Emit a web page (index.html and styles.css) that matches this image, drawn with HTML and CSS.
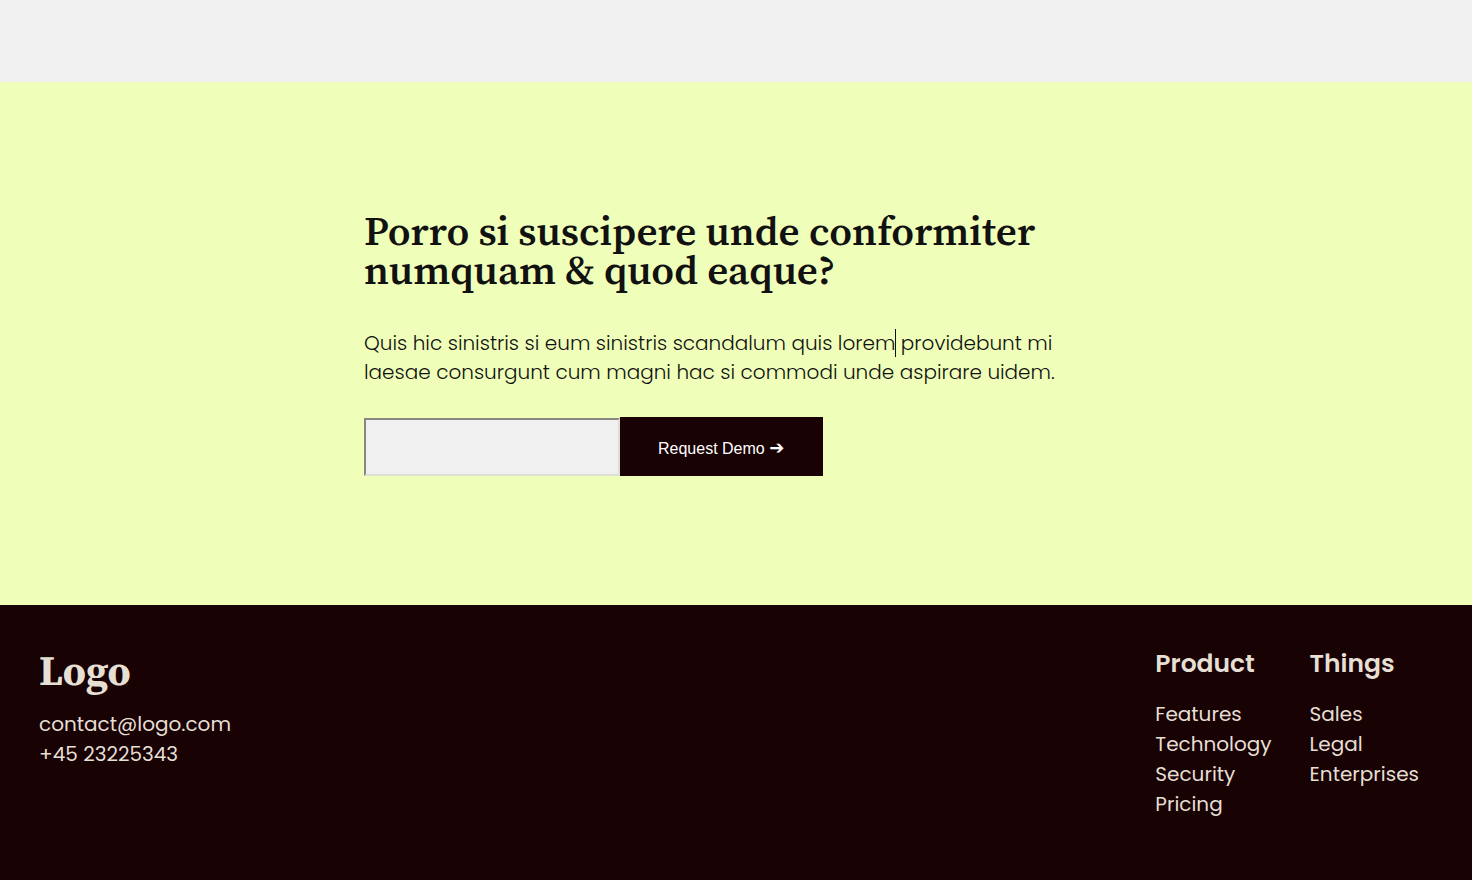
FILE: index.html
```html
<!DOCTYPE html>
<html lang="en">
<head>
<meta charset="utf-8">
<meta name="viewport" content="width=device-width, initial-scale=1">
<title>Logo</title>
<link rel="stylesheet" href="styles.css">
</head>
<body>
<main>
  <section class="cta">
    <div class="cta-content">
      <h2 class="cta-title">Porro si suscipere unde conformiter<br>numquam &amp; quod eaque?</h2>
      <p class="cta-text">Quis hic sinistris si eum sinistris scandalum quis lorem<span class="caret"></span> providebunt mi<br>laesae consurgunt cum magni hac si commodi unde aspirare uidem.</p>
      <form class="cta-form">
        <input class="cta-input" type="email" aria-label="Email">
        <button class="cta-button" type="button">Request Demo <span class="arrow">➔</span></button>
      </form>
    </div>
  </section>
</main>
<footer class="footer">
  <div class="brand">
    <h2 class="logo">Logo</h2>
    <a class="link" href="mailto:contact@logo.com">contact@logo.com</a>
    <a class="link" href="tel:+4523225343">+45 23225343</a>
  </div>
  <nav class="columns">
    <div class="column">
      <h3 class="column-title">Product</h3>
      <a class="link" href="#">Features</a>
      <a class="link" href="#">Technology</a>
      <a class="link" href="#">Security</a>
      <a class="link" href="#">Pricing</a>
    </div>
    <div class="column">
      <h3 class="column-title">Things</h3>
      <a class="link" href="#">Sales</a>
      <a class="link" href="#">Legal</a>
      <a class="link" href="#">Enterprises</a>
    </div>
  </nav>
</footer>
</body>
</html>
```
FILE: styles.css
```css
* { box-sizing: border-box; }
body {
  margin: 0;
  min-height: 100vh;
  display: flex;
  flex-direction: column;
  background: #f0f0f0;
  color: #111;
  font-family: Poppins, "Open Sans", sans-serif;
  font-size: 20px;
}
h2, h3, p { margin: 0; }
main { padding-top: 82px; }
.cta {
  display: flex;
  justify-content: center;
  padding: 130px 40px 129px;
  background: #effeb9;
}
.cta-content { width: 100%; max-width: 744px; }
.cta-title {
  font-family: "Source Serif 4", "Liberation Serif", serif;
  font-size: 41px;
  font-weight: 600;
  line-height: 39px;
}
.cta-text {
  margin-top: 39px;
  font-weight: 300;
  line-height: 29px;
}
.caret {
  display: inline-block;
  width: 1px;
  height: 28px;
  margin: -6px -1px -2px 0;
  vertical-align: middle;
  background: #111;
}
.cta-form {
  display: flex;
  align-items: flex-end;
  margin-top: 30px;
}
.cta-input {
  width: 256px;
  height: 58px;
  padding: 0 16px;
  border: 2px solid;
  border-color: #88887f #deded2 #deded2 #88887f;
  border-radius: 0;
  background: #f0f0f0;
  font: inherit;
}
.cta-button {
  height: 59px;
  padding: 4px 39px 0 38px;
  border: 0;
  background: #180204;
  color: #fff;
  font: 16px "Liberation Sans", "DejaVu Sans", sans-serif;
}
.arrow {
  font-size: 18px;
  font-weight: 700;
  line-height: 16px;
}
.footer {
  flex: 1;
  display: flex;
  justify-content: space-between;
  padding: 44px 53px 60px 39px;
  background: #180204;
  color: #e6dfd3;
}
.brand, .column { display: flex; flex-direction: column; }
.logo {
  margin-bottom: 16px;
  font-family: "Source Serif 4", "Liberation Serif", serif;
  font-size: 41px;
  font-weight: 700;
  line-height: 44px;
}
.columns { display: flex; gap: 38px; }
.column-title {
  margin-bottom: 20px;
  font-size: 25px;
  font-weight: 600;
  line-height: 30px;
}
.link {
  color: inherit;
  line-height: 30px;
  text-decoration: none;
}
```
